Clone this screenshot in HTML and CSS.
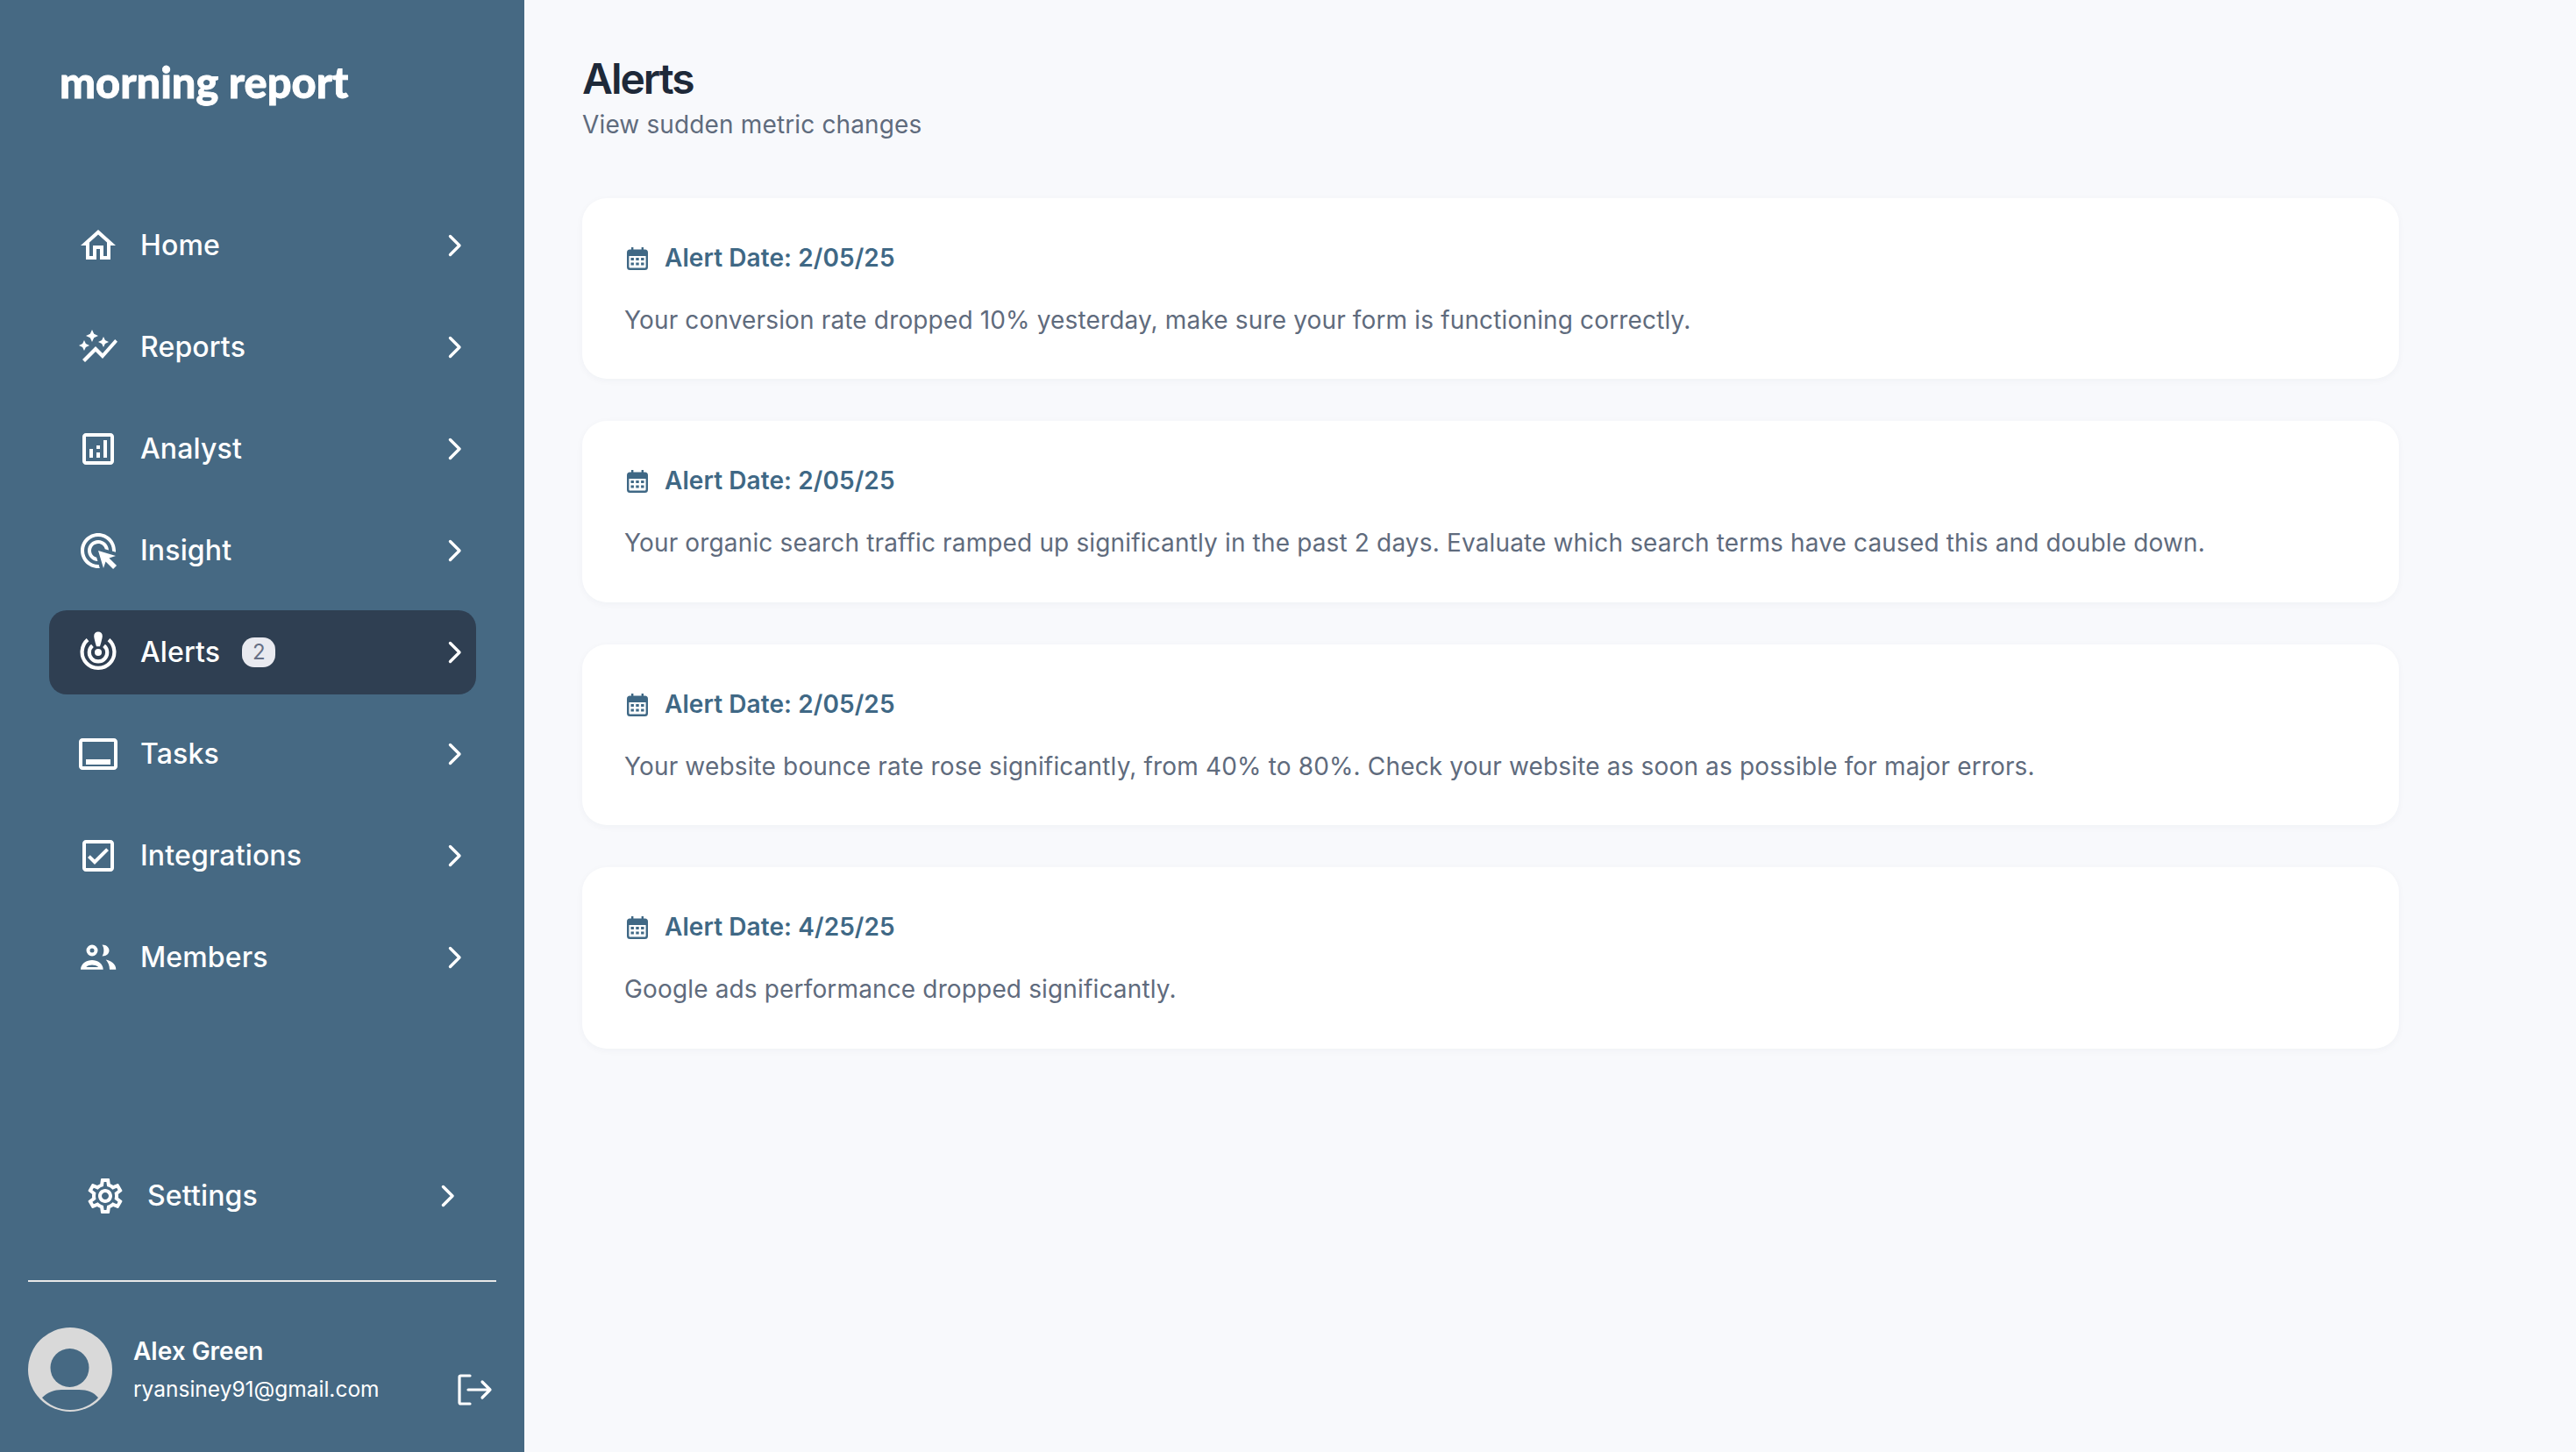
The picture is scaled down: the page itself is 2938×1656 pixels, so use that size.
FILE: index.html
```html
<!DOCTYPE html>
<html>
<head>
	<title>morning report</title>
	<meta http-equiv="content-type" content="text/html;charset=utf-8" />
	<link rel="stylesheet" href="styles.css">
</head>
<body>
	<svg class="defs" width="0" height="0">
		<symbol id="chev" viewBox="0 0 16 26"><path d="M2.5 2.5 13 13 2.5 23.5" fill="none" stroke="currentColor" stroke-width="3.4" stroke-linecap="round" stroke-linejoin="round"/></symbol>
		<symbol id="cal" viewBox="0 0 24 26"><path d="M5 0h2.4v2.6h9.2V0H19v2.6h1.5A3.5 3.5 0 0 1 24 6.100v16.400a3.500 3.500 0 0 1-3.500 3.500h-17A3.500 3.500 0 0 1 0 22.500V6.100a3.500 3.500 0 0 1 3.500-3.500H5zM2.400 10v12.300c0 .8.600 1.300 1.300 1.300h16.600c.7 0 1.300-.5 1.300-1.300V10z"/><path d="M4.500 12h3.400v3H4.500zm5.800 0h3.400v3h-3.400zm5.800 0h3.400v3h-3.400zM4.500 17.500h3.400v3H4.500zm5.800 0h3.400v3h-3.400zm5.800 0h3.400v3h-3.400z"/></symbol>
	</svg>
	<div class="app">
		<aside class="side">
			<div class="logo">morning report</div>
			<nav class="nav">
				<a class="item">
					<svg class="ico" viewBox="0 0 24 24"><path d="M12 5.690l5 4.500V18h-2v-6H9v6H7v-7.810l5-4.500M12 3L2 12h3v8h6v-6h2v6h6v-8h3L12 3z"/></svg>
					<span class="label">Home</span>
					<svg class="chev"><use href="#chev"/></svg>
				</a>
				<a class="item">
					<svg class="ico" viewBox="0 0 24 24"><path d="M14.060 9.940L12 9l2.060-.94L15 6l.94 2.060L18 9l-2.060.94L15 12l-.94-2.060zM4 14l.94-2.060L7 11l-2.060-.94L4 8l-.94 2.060L1 11l2.060.94L4 14zm4.500-5l1.090-2.410L12 5.500l-2.410-1.090L8.500 2 7.410 4.410 5 5.500l2.410 1.090L8.500 9zm-4 11.500l6-6.010 4 4L23 8.930l-1.410-1.410-7.090 7.970-4-4L3 19l1.500 1.500z"/></svg>
					<span class="label">Reports</span>
					<svg class="chev"><use href="#chev"/></svg>
				</a>
				<a class="item">
					<svg class="ico" viewBox="0 0 24 24"><path d="M19 3H5c-1.100 0-2 .9-2 2v14c0 1.100.9 2 2 2h14c1.100 0 2-.9 2-2V5c0-1.100-.9-2-2-2zm0 16H5V5h14v14zM7 12h2v5H7zm8-5h2v10h-2zm-4 7h2v3h-2zm0-4h2v2h-2z"/></svg>
					<span class="label">Analyst</span>
					<svg class="chev"><use href="#chev"/></svg>
				</a>
				<a class="item">
					<svg class="ico" viewBox="0 0 24 24"><path d="M11.710 17.990C8.530 17.850 6 15.220 6 12c0-3.310 2.690-6 6-6 3.220 0 5.850 2.530 5.990 5.710l-2.100-.63C15.480 9.310 13.890 8 12 8c-2.210 0-4 1.790-4 4 0 1.890 1.310 3.480 3.080 3.890l.63 2.100zM22 12c0 .3-.01.6-.04.9l-1.970-.59c.01-.1.01-.21.01-.31 0-4.420-3.580-8-8-8s-8 3.580-8 8 3.580 8 8 8c.1 0 .21 0 .31-.01l.59 1.970c-.3.03-.6.04-.9.04-5.520 0-10-4.480-10-10S6.480 2 12 2s10 4.480 10 10zm-3.770 4.260L22 15l-10-3 3 10 1.260-3.770 4.270 4.270 1.980-1.980-4.280-4.260z"/></svg>
					<span class="label">Insight</span>
					<svg class="chev"><use href="#chev"/></svg>
				</a>
				<a class="item active">
					<svg class="ico" viewBox="0 0 24 24"><path d="M14.400 2.600c0 1.500-1.400 6-1.400 6h-2S9.600 4.100 9.600 2.600a2.400 2.400 0 0 1 4.800 0z"/><circle cx="12" cy="12" r="2"/><path d="M6 4.800a9.200 9.200 0 1 0 12 0M8.700 8.200a5.100 5.100 0 1 0 6.600 0" fill="none" stroke="currentColor" stroke-width="2.100"/></svg>
					<span class="label">Alerts</span>
					<span class="badge">2</span>
					<svg class="chev"><use href="#chev"/></svg>
				</a>
				<a class="item">
					<svg class="ico" viewBox="0 0 24 24"><path d="M21 3H3c-1.100 0-2 .9-2 2v14c0 1.100.9 2 2 2h18c1.100 0 2-.9 2-2V5c0-1.100-.9-2-2-2zm0 16H3V5h18v14zM5 15h14v3H5z"/></svg>
					<span class="label">Tasks</span>
					<svg class="chev"><use href="#chev"/></svg>
				</a>
				<a class="item">
					<svg class="ico" viewBox="0 0 24 24"><path d="M19 3H5c-1.110 0-2 .9-2 2v14c0 1.100.89 2 2 2h14c1.110 0 2-.9 2-2V5c0-1.100-.89-2-2-2zm0 16H5V5h14v14zM17.990 9l-1.410-1.420-6.590 6.590-2.580-2.570-1.420 1.410 4 3.990z"/></svg>
					<span class="label">Integrations</span>
					<svg class="chev"><use href="#chev"/></svg>
				</a>
				<a class="item">
					<svg class="ico" viewBox="0 0 48 48"><path d="M17 9.500a6.500 6.500 0 1 1 0 13 6.500 6.500 0 0 1 0-13zm0 4a2.500 2.500 0 1 0 0 5 2.500 2.500 0 0 0 0-5zM28.500 9.500C34 9.500 36.500 13 36.500 16s-2.500 6.500-8 6.500c2.500-3.500 2.500-9.500 0-13zM4 37.700C4 31 11 27 17 27s12.700 4 12.700 10.700zM10.300 35h14C22 33.200 19.500 32.500 17 32.500s-5 .7-6.700 2.500zM32.700 26.500C38 27.500 44.300 31 44.300 37.700H37C37 33 35 29 32.700 26.500z" fill-rule="evenodd"/></svg>
					<span class="label">Members</span>
					<svg class="chev"><use href="#chev"/></svg>
				</a>
			</nav>
			<a class="item settings">
				<svg class="ico" viewBox="0 0 24 24"><path d="M19.430 12.980c.04-.32.07-.64.07-.98 0-.34-.03-.66-.07-.98l2.110-1.650c.19-.15.24-.42.12-.64l-2-3.460c-.09-.16-.26-.25-.44-.25-.06 0-.12.01-.17.03l-2.490 1c-.52-.4-1.080-.73-1.690-.98l-.38-2.650C14.460 2.180 14.250 2 14 2h-4c-.25 0-.46.18-.49.42l-.38 2.650c-.61.25-1.170.59-1.690.98l-2.490-1c-.06-.02-.12-.03-.18-.03-.17 0-.34.09-.43.25l-2 3.460c-.13.22-.07.49.12.64l2.110 1.650c-.04.32-.07.65-.07.98 0 .33.03.66.07.98l-2.110 1.650c-.19.15-.24.42-.12.64l2 3.460c.09.16.26.25.44.25.06 0 .12-.01.17-.03l2.490-1c.52.4 1.080.73 1.690.98l.38 2.650c.03.24.24.42.49.42h4c.25 0 .46-.18.49-.42l.38-2.650c.61-.25 1.170-.59 1.690-.98l2.490 1c.06.02.12.03.18.03.17 0 .34-.09.43-.25l2-3.460c.12-.22.07-.49-.12-.64l-2.110-1.650zm-1.980-1.710c.04.31.05.52.05.73 0 .21-.02.43-.05.73l-.14 1.130.89.7 1.080.84-.7 1.210-1.270-.51-1.040-.42-.9.68c-.43.32-.84.56-1.250.73l-1.060.43-.16 1.130-.2 1.350h-1.400l-.19-1.350-.16-1.130-1.060-.43c-.43-.18-.83-.41-1.230-.71l-.91-.7-1.060.43-1.270.51-.7-1.210 1.080-.84.89-.7-.14-1.130c-.03-.31-.05-.54-.05-.74s.02-.43.05-.73l.14-1.130-.89-.7-1.080-.84.7-1.210 1.270.51 1.040.42.9-.68c.43-.32.84-.56 1.250-.73l1.060-.43.16-1.130.2-1.350h1.390l.19 1.350.16 1.130 1.060.43c.43.18.83.41 1.230.71l.91.7 1.060-.43 1.270-.51.7 1.210-1.070.85-.89.7.14 1.130zM12 8c-2.210 0-4 1.790-4 4s1.790 4 4 4 4-1.790 4-4-1.790-4-4-4zm0 6c-1.100 0-2-.9-2-2s.9-2 2-2 2 .9 2 2-.9 2-2 2z"/></svg>
				<span class="label">Settings</span>
				<svg class="chev"><use href="#chev"/></svg>
			</a>
			<div class="user">
				<svg class="avatar" viewBox="0 0 96 96"><circle cx="48" cy="48" r="48" fill="#d9d9d9"/><circle cx="47.500" cy="46" r="22" fill="#466983"/><path d="M16 80C22 74 30 71 38 71h20c10 0 17 3 22 9-7 8-19 14-32 14S23 88 16 80z" fill="#466983"/></svg>
				<div class="who">
					<div class="name">Alex Green</div>
					<div class="mail">ryansiney91@gmail.com</div>
				</div>
				<svg class="out" viewBox="0 0 40 36"><path d="M14 2H3.500A1.500 1.500 0 0 0 2 3.500v29A1.500 1.500 0 0 0 3.500 34H14M12 18h25M28 9l9 9-9 9" fill="none" stroke="currentColor" stroke-width="3.200" stroke-linecap="round" stroke-linejoin="round"/></svg>
			</div>
		</aside>
		<main class="main">
			<h1 class="title">Alerts</h1>
			<p class="sub">View sudden metric changes</p>
			<div class="list">
				<div class="card">
					<div class="date"><svg class="cal"><use href="#cal"/></svg>Alert Date: 2/05/25</div>
					<p class="text">Your conversion rate dropped 10% yesterday, make sure your form is functioning correctly.</p>
				</div>
				<div class="card">
					<div class="date"><svg class="cal"><use href="#cal"/></svg>Alert Date: 2/05/25</div>
					<p class="text">Your organic search traffic ramped up significantly in the past 2 days. Evaluate which search terms have caused this and double down.</p>
				</div>
				<div class="card">
					<div class="date"><svg class="cal"><use href="#cal"/></svg>Alert Date: 2/05/25</div>
					<p class="text">Your website bounce rate rose significantly, from 40% to 80%. Check your website as soon as possible for major errors.</p>
				</div>
				<div class="card">
					<div class="date"><svg class="cal"><use href="#cal"/></svg>Alert Date: 4/25/25</div>
					<p class="text">Google ads performance dropped significantly.</p>
				</div>
			</div>
		</main>
	</div>
</body>
</html>
```

FILE: styles.css
```css
*{padding:0;margin:0;box-sizing:border-box;}
html,body{height:100%;}
body{font-family:Inter,"Liberation Sans",sans-serif;background:#f8f9fc;overflow:hidden;}
.defs{display:block;}

.app{display:flex;height:1656px;}

.side{width:598px;flex:none;background:#466983;color:#fff;display:flex;flex-direction:column;padding:0 32px;}
.logo{font-family:Lato,sans-serif;font-weight:900;font-size:48.7px;line-height:56px;margin:65px 0 0 36px;-webkit-text-stroke:.8px #fff;}
.nav{display:flex;flex-direction:column;gap:20px;margin:111px 0 0 24px;width:487px;}
.item{display:flex;align-items:center;height:96px;padding:0 16px 0 32px;border-radius:20px;color:#fff;}
.item.active{background:#2f3f52;}
.ico{width:48px;height:48px;fill:currentColor;flex:none;}
.label{font-size:32px;font-weight:550;line-height:40px;margin-left:24px;letter-spacing:.15px;}
.badge{width:38px;height:34px;margin-left:25px;border-radius:14px;background:#e9eaf0;color:#666f85;font-size:24px;line-height:34px;text-align:center;}
.chev{width:16px;height:26px;margin-left:auto;flex:none;}
.settings{margin:auto 0 0 32px;width:487px;padding-right:32px;}
.settings .label{margin-left:24px;}

.user{display:flex;border-top:2px solid #e8e8e8;margin-top:48px;height:196px;padding-top:52px;}
.avatar{width:96px;height:96px;flex:none;}
.who{margin-left:24px;color:#fff;}
.name{font-size:28px;font-weight:600;line-height:34px;margin-top:10px;}
.mail{font-size:24.5px;line-height:32px;margin-top:10px;}
.out{width:40px;height:36px;margin:53px 4px 0 auto;flex:none;}

.main{flex:1;padding:64px 0 0 66px;}
.title{font-size:48px;font-weight:600;line-height:52px;letter-spacing:-2px;color:#1e2939;}
.sub{font-size:28px;line-height:36px;margin-top:8px;color:#5f6b7d;letter-spacing:.14px;}
.list{display:flex;flex-direction:column;gap:48px;width:2072px;margin-top:66px;}
.card{height:206.4px;background:#fff;border-radius:28px;padding:50px 48px 0;box-shadow:0 2px 8px rgba(30,50,80,.04);}
.date{display:flex;align-items:center;font-size:28px;font-weight:600;line-height:36px;color:#3f6885;letter-spacing:.08px;}
.cal{width:24px;height:26px;margin:2px 19px 0 3px;fill:currentColor;flex:none;}
.text{font-size:28px;line-height:36px;margin-top:35px;color:#5f6b7d;letter-spacing:.15px;}
```
